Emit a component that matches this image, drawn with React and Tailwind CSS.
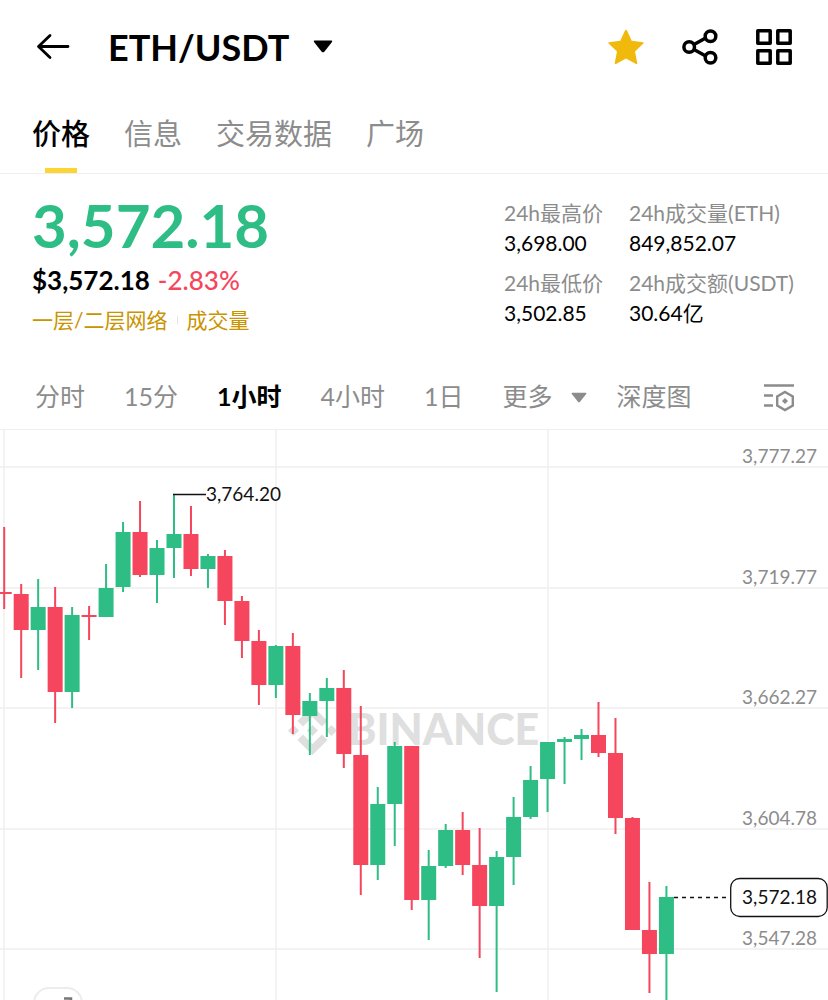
import React, { useState } from 'react';
import { SiBinance } from 'react-icons/si';

const TABS = ['价格', '信息', '交易数据', '广场'];
const INTERVALS = ['分时', '15分', '1小时', '4小时', '1日'];

const STATS = [
  { label: '24h最高价', value: '3,698.00' },
  { label: '24h成交量(ETH)', value: '849,852.07' },
  { label: '24h最低价', value: '3,502.85' },
  { label: '24h成交额(USDT)', value: '30.64亿' },
];

const GRID_ROWS = [
  { y: 37, price: '3,777.27' },
  { y: 158, price: '3,719.77' },
  { y: 278, price: '3,662.27' },
  { y: 399, price: '3,604.78' },
  { y: 519, price: '3,547.28' },
];
const GRID_COLS = [4, 276, 548];

// [rising, high, body top, body bottom, low] in chart units
const CANDLES = [
  [0, 97, 162, 164, 179],
  [0, 154, 164, 200, 248],
  [1, 149, 177, 200, 240],
  [0, 157, 177, 262, 293],
  [1, 177, 185, 262, 278],
  [0, 176, 185, 187, 210],
  [1, 134, 158, 187, 187],
  [1, 92, 102, 157, 162],
  [0, 71, 102, 145, 147],
  [1, 110, 118, 145, 173],
  [1, 64, 104, 118, 148],
  [0, 76, 104, 139, 146],
  [1, 124, 126, 139, 158],
  [0, 120, 126, 171, 195],
  [0, 166, 171, 211, 228],
  [0, 200, 211, 255, 275],
  [1, 215, 216, 255, 268],
  [0, 203, 216, 285, 304],
  [1, 263, 271, 286, 325],
  [1, 248, 258, 271, 307],
  [0, 240, 258, 324, 338],
  [0, 276, 325, 435, 465],
  [1, 357, 374, 435, 450],
  [1, 312, 316, 374, 416],
  [0, 316, 316, 470, 480],
  [1, 420, 436, 470, 510],
  [1, 394, 400, 436, 438],
  [0, 382, 400, 435, 445],
  [0, 398, 435, 476, 528],
  [1, 421, 427, 476, 562],
  [1, 367, 387, 427, 455],
  [1, 336, 350, 387, 389],
  [1, 312, 312, 349, 382],
  [1, 307, 309, 312, 354],
  [1, 299, 305, 309, 330],
  [0, 272, 305, 323, 327],
  [0, 288, 323, 388, 404],
  [0, 387, 388, 500, 500],
  [0, 452, 500, 524, 563],
  [1, 456, 467, 524, 573],
];
const STEP = 16.98;

function Caret({ className }) {
  return (
    <svg viewBox="0 0 20 13" className={className} fill="currentColor" aria-hidden="true">
      <path d="M1.5.5h17q1.300.4.5 1.600l-7.700 9.600q-1.300 1.300-2.600 0L1 2.100Q.2.900 1.500.5z" />
    </svg>
  );
}

function Header() {
  return (
    <header className="flex h-[93px] items-center px-9">
      <button type="button" aria-label="返回">
        <svg viewBox="0 0 34 28" className="h-7 w-[34px]" fill="none" stroke="currentColor" strokeWidth="2.800" strokeLinecap="round" strokeLinejoin="round">
          <path d="M32 13.500H3M14 2.500L2.500 13.500 14 24.500" />
        </svg>
      </button>
      <button type="button" className="ml-[38px] flex items-center gap-6">
        <h1 className="text-[36px] leading-[44px] font-bold">ETH/USDT</h1>
        <Caret className="h-[13px] w-5" />
      </button>
      <div className="ml-auto flex items-center gap-[38px]">
        <button type="button" aria-label="收藏" className="text-[#f0b90b]">
          <svg viewBox="0 0 36 36" className="size-9" fill="currentColor">
            <path d="M17 1.500q1-1.500 2 0l4.700 10.300 11.300 1.400q1.100.4.400 1.400l-8.400 7.800 2.300 11.800q-.1 1.200-1.300.8L18 29.500 8 35q-1.200.4-1.300-.8L9 22.400.600 14.600q-.7-1 .4-1.400l11.300-1.400z" />
          </svg>
        </button>
        <button type="button" aria-label="分享">
          <svg viewBox="0 0 36 36" className="size-9" fill="none" stroke="currentColor" strokeWidth="3.500">
            <circle cx="7.200" cy="18" r="5.300" />
            <circle cx="28.500" cy="7.200" r="5.300" />
            <circle cx="28.500" cy="28.800" r="5.300" />
            <path d="M12 15.500L23.700 9M12 20.500L23.700 27" />
          </svg>
        </button>
        <button type="button" aria-label="更多功能">
          <svg viewBox="0 0 36 36" className="size-9" fill="none" stroke="currentColor" strokeWidth="3.500" strokeLinejoin="round">
            <path d="M1.800 1.800h12.400v12.400H1.800zM21.800 1.800h12.400v12.400H21.800zM1.800 21.800h12.400v12.400H1.800zM21.800 21.800h12.400v12.400H21.800z" />
          </svg>
        </button>
      </div>
    </header>
  );
}

function Candle({ candle, index }) {
  const [rising, high, top, bottom, low] = candle;
  const x = 4.2 + index * STEP;
  return (
    <g fill={rising ? '#2ebd85' : '#f6465d'}>
      <rect x={x - 1} y={high} width="2" height={low - high} />
      <rect x={x - 7.5} y={top} width="15" height={bottom - top} />
    </g>
  );
}

function Chart() {
  return (
    <div className="relative overflow-hidden">
      <svg viewBox="0 0 828 571" className="block h-auto w-full" role="img" aria-label="ETH/USDT 1小时 K线图">
        <g stroke="#efefef" strokeWidth="1.500">
          {GRID_ROWS.map(({ y }) => (
            <line key={y} x1="0" x2="828" y1={y} y2={y} />
          ))}
          {GRID_COLS.map((x) => (
            <line key={x} x1={x} x2={x} y1="0" y2="571" />
          ))}
        </g>

        {/* Watermark */}
        <g fill="#dfdfdf">
          <SiBinance x="288" y="276" size="49" color="#dfdfdf" />
          <text x="348" y="315" fontSize="43" className="font-black">BINANCE</text>
        </g>

        {CANDLES.map((candle, i) => (
          <Candle key={i} candle={candle} index={i} />
        ))}

        {/* Highest price marker */}
        <path d="M173 64.500H206" stroke="#111" strokeWidth="1.300" />
        <text x="206" y="71" fontSize="19" fill="#111">3,764.20</text>

        <g fontSize="19" fill="#8c8c8c" textAnchor="end">
          {GRID_ROWS.map(({ y, price }) => (
            <text key={price} x="817" y={y - 4}>{price}</text>
          ))}
        </g>

        {/* Last price */}
        <path d="M674 467.500H730" stroke="#111" strokeWidth="1.300" strokeDasharray="4 4" />
        <rect x="730.700" y="448.500" width="96.500" height="38" rx="9" fill="#fff" stroke="#111" strokeWidth="1.300" />
        <text x="817" y="474" fontSize="19" fill="#111" textAnchor="end">3,572.18</text>
      </svg>
      <button
        type="button"
        aria-label="全屏"
        className="absolute -bottom-9 left-[33px] flex size-[50px] items-center justify-center rounded-2xl border-2 border-[#ececec] bg-white text-[#777]"
      >
        <svg viewBox="0 0 34 34" className="size-[34px] shrink-0" fill="none" stroke="currentColor" strokeWidth="2.500">
          <path d="M23 3.500h7V10M11 30.500H4V24" />
        </svg>
      </button>
    </div>
  );
}

function App() {
  const [tab, setTab] = useState('价格');
  const [interval, setInterval] = useState('1小时');

  return (
    <div className="w-full bg-white font-[Lato,'Noto_Sans_CJK_SC',sans-serif] text-black">
      <Header />

      <nav className="flex h-[81px] gap-[34px] border-b border-[#efefef] px-8">
        {TABS.map((name) => (
          <button
            key={name}
            type="button"
            onClick={() => setTab(name)}
            className={`flex flex-col items-center justify-between pt-5 text-[29px] leading-[42px] ${
              tab === name ? 'font-medium text-black' : 'text-[#8c8c8c]'
            }`}
          >
            {name}
            {tab === name && <span className="h-[5px] w-8 bg-[#fcd535]" />}
          </button>
        ))}
      </nav>

      <section className="flex items-start justify-between px-8 pt-6">
        <div>
          <div className="text-[60px] leading-[54px] font-bold text-[#2ebd85]">3,572.18</div>
          <div className="mt-2 flex gap-2 text-[26px] leading-10">
            <span className="font-bold">$3,572.18</span>
            <span className="font-medium text-[#f6465d]">-2.83%</span>
          </div>
          <div className="flex items-center gap-[9px] text-[21px] leading-10 text-[#c99400]">
            <a href="#layer">一层/二层网络</a>
            <span className="h-2 w-px bg-[#e5e5e5]" />
            <a href="#volume">成交量</a>
          </div>
        </div>
        <dl className="grid grid-cols-[125px_167px] gap-y-2.5 text-[21px] leading-[30px] whitespace-nowrap">
          {STATS.map(({ label, value }) => (
            <div key={label}>
              <dt className="text-[#8c8c8c]">{label}</dt>
              <dd>{value}</dd>
            </div>
          ))}
        </dl>
      </section>

      <div className="mt-[25px] flex h-[65px] items-center gap-[39px] border-b border-[#efefef] pr-[33px] pl-[35px] text-[25px] text-[#8c8c8c]">
        {INTERVALS.map((name) => (
          <button
            key={name}
            type="button"
            onClick={() => setInterval(name)}
            className={interval === name ? 'font-bold text-black' : ''}
          >
            {name}
          </button>
        ))}
        <div className="flex gap-[30px]">
          <button type="button" className="flex items-center gap-[18px]">
            更多
            <Caret className="h-[11px] w-4" />
          </button>
          <button type="button">深度图</button>
        </div>
        <button type="button" aria-label="图表设置" className="ml-auto">
          <svg viewBox="0 0 32 30" className="h-[30px] w-8" fill="none" stroke="currentColor" strokeWidth="2.400">
            <path d="M1 3.500h30M1 13.500h9M1 23.500h9M22 10l7.800 4.500v9L22 28l-7.800-4.500v-9z" />
            <path d="M22 16l3 3-3 3-3-3z" fill="currentColor" stroke="none" />
          </svg>
        </button>
      </div>

      <Chart />
    </div>
  );
}

export default App;
